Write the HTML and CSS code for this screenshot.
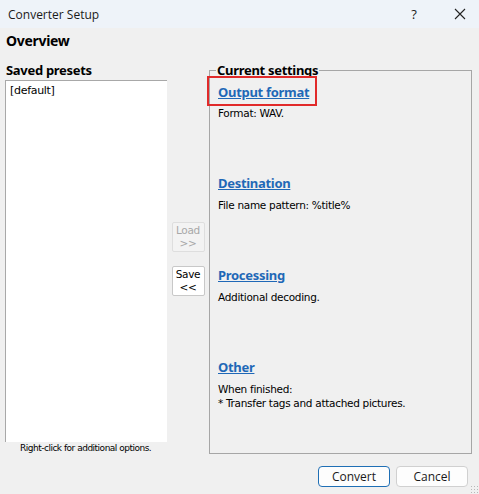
FILE: index.html
```html
<!DOCTYPE html>
<html>
<head>
<meta charset="utf-8">
<link rel="stylesheet" href="styles.css">
</head>
<body>
<div class="window">
  <div class="titlebar">
    <span class="title">Converter Setup</span>
    <span class="tb-btn help">?</span>
    <span class="tb-btn close">
      <svg width="12" height="12" viewBox="0 0 12 12"><path d="M1 1 L11 11 M11 1 L1 11" stroke="#222" stroke-width="1.1" fill="none"/></svg>
    </span>
  </div>
  <div class="content">
    <div class="overview">Overview</div>
    <div class="row">
      <div class="left">
        <div class="label">Saved presets</div>
        <div class="list"><div class="item">[default]</div></div>
        <div class="hint">Right-click for additional options.</div>
      </div>
      <div class="middle">
        <button class="small-btn disabled">Load<br>&gt;&gt;</button>
        <button class="small-btn">Save<br>&lt;&lt;</button>
      </div>
      <fieldset class="group">
        <legend>Current settings</legend>
        <div class="section">
          <div class="head"><span class="mark"><a class="link">Output format</a></span></div>
          <div class="desc">Format: WAV.</div>
        </div>
        <div class="section">
          <div class="head"><a class="link">Destination</a></div>
          <div class="desc">File name pattern: %title%</div>
        </div>
        <div class="section">
          <div class="head"><a class="link">Processing</a></div>
          <div class="desc">Additional decoding.</div>
        </div>
        <div class="section">
          <div class="head"><a class="link">Other</a></div>
          <div class="desc">When finished:<br>* Transfer tags and attached pictures.</div>
        </div>
      </fieldset>
    </div>
    <div class="footer">
      <button class="btn primary">Convert</button>
      <button class="btn">Cancel</button>
    </div>
  </div>
  <div class="grip"></div>
</div>
</body>
</html>
```

FILE: styles.css
```css
html, body {
  margin: 0;
  padding: 0;
}
body {
  width: 479px;
  height: 494px;
  overflow: hidden;
  background: #f0f0f0;
  font-family: "Noto Sans", "DejaVu Sans", sans-serif;
  color: #000;
}
.window {
  position: relative;
  width: 479px;
  height: 494px;
  display: flex;
  flex-direction: column;
}
.titlebar {
  height: 28px;
  background: #eef3f9;
  display: flex;
  align-items: center;
  padding-left: 8px;
  font-size: 12px;
  color: #1a1a1a;
}
.title {
  flex: 1;
  font-family: "Open Sans", "Noto Sans", sans-serif;
  font-size: 12px;
}
.tb-btn {
  display: flex;
  align-items: center;
  justify-content: center;
  width: 46px;
  height: 28px;
}
.help {
  font-family: "Open Sans", sans-serif;
  font-size: 13px;
}
.close {
  margin-right: -4px;
}
.content {
  flex: 1;
  display: flex;
  flex-direction: column;
  padding: 4px 7px 0 5px;
}
.overview {
  font-family: "Noto Sans", sans-serif;
  font-weight: bold;
  font-size: 14px;
  line-height: 18px;
  padding-left: 1px;
  letter-spacing: -0.3px;
}
.row {
  display: flex;
  margin-top: 13px;
  height: 391px;
}
.left {
  width: 162px;
  display: flex;
  flex-direction: column;
}
.label {
  font-weight: bold;
  font-size: 13px;
  line-height: 14px;
  padding-left: 1px;
  margin-bottom: 3px;
  letter-spacing: -0.3px;
}
.list {
  height: 362px;
  background: #fff;
  border-left: 1px solid #a8a8a8;
  border-top: 1px solid #a8a8a8;
  box-sizing: border-box;
}
.item {
  font-family: "DejaVu Sans", sans-serif;
  font-size: 11px;
  line-height: 14px;
  padding: 3px 0 0 4px;
  letter-spacing: -0.3px;
}
.hint {
  font-family: "DejaVu Sans", sans-serif;
  font-size: 9px;
  line-height: 12px;
  padding-left: 15px;
  letter-spacing: -0.5px;
}
.middle {
  width: 42px;
  display: flex;
  flex-direction: column;
  align-items: center;
  padding-top: 159px;
  gap: 14px;
}
.small-btn {
  width: 33px;
  height: 30px;
  margin: 0;
  padding: 0;
  font-family: "DejaVu Sans", sans-serif;
  font-size: 10.5px;
  line-height: 13px;
  background: #fff;
  border: 1px solid #c8c8c8;
  border-radius: 2px;
  color: #000;
  letter-spacing: -0.3px;
}
.small-btn.disabled {
  color: #a8a8a8;
  background: #f3f3f3;
  border-color: #dedede;
}
.group {
  width: 263px;
  height: 391px;
  box-sizing: border-box;
  margin: 0;
  padding: 0 0 0 8px;
  border: 1px solid #a6a6a6;
  min-width: 0;
}
.group legend {
  font-weight: bold;
  font-size: 13px;
  line-height: 14px;
  padding: 0 1px;
  margin-left: -2px;
  letter-spacing: -0.3px;
}
.section {
  height: 92px;
  display: flex;
  flex-direction: column;
}
.head {
  height: 18px;
  margin-top: 5px;
  display: flex;
  align-items: center;
}
.link {
  font-weight: bold;
  font-size: 13px;
  color: #1f68b7;
  text-decoration: underline;
  letter-spacing: -0.3px;
}
.mark {
  display: inline-block;
  border: 2px solid #e12a2a;
  padding: 2px 6px 2px 9px;
  margin-left: -11px;
}
.desc {
  font-family: "DejaVu Sans", sans-serif;
  font-size: 10.5px;
  line-height: 14px;
  margin-top: 6px;
  letter-spacing: -0.3px;
}
.footer {
  display: flex;
  justify-content: flex-end;
  gap: 6px;
  margin-top: 12px;
  padding-right: 4px;
}
.btn {
  width: 72px;
  height: 21px;
  margin: 0;
  padding: 0;
  font-family: "Open Sans", "Noto Sans", sans-serif;
  font-size: 12px;
  background: #fdfdfd;
  border: 1px solid #d0d0d0;
  border-radius: 4px;
  color: #1a1a1a;
}
.btn.primary {
  border-color: #1f6fb5;
}
.grip {
  position: absolute;
  right: 1px;
  bottom: 1px;
  width: 8px;
  height: 8px;
  background-image: radial-gradient(circle, #b8b8b8 0.8px, transparent 1px);
  background-size: 3px 3px;
}
```
